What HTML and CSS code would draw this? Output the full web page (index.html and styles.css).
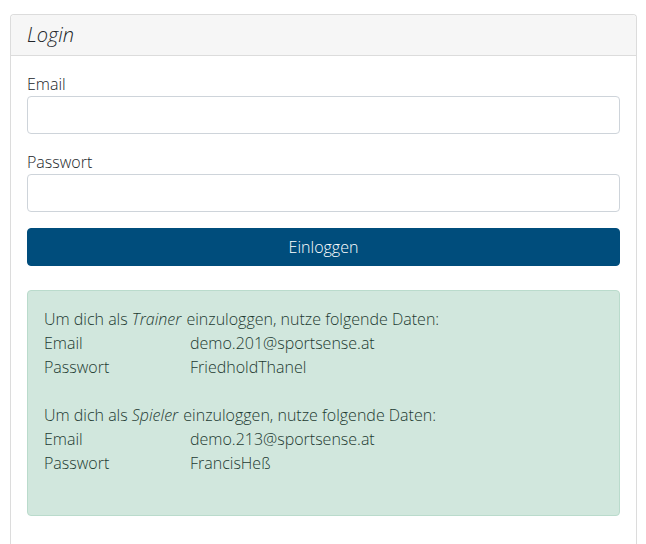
FILE: index.html
```html
<!DOCTYPE html>
<html lang="de">
<head>
<meta charset="utf-8">
<title>Login</title>
<link rel="stylesheet" href="styles.css">
</head>
<body>
<div class="card">
  <div class="card-header"><h1 class="title">Login</h1></div>
  <div class="card-body">
    <div class="field">
      <label class="label" for="email">Email</label>
      <input class="input" id="email" type="text">
    </div>
    <div class="field">
      <label class="label" for="pw">Passwort</label>
      <input class="input" id="pw" type="password">
    </div>
    <button class="btn" type="button">Einloggen</button>
    <div class="alert">
      <p class="intro">Um dich als <em>Trainer</em> einzuloggen, nutze folgende Daten:</p>
      <div class="creds">
        <span>Email</span><span>demo.201@sportsense.at</span>
        <span>Passwort</span><span>FriedholdThanel</span>
      </div>
      <p class="intro gap">Um dich als <em>Spieler</em> einzuloggen, nutze folgende Daten:</p>
      <div class="creds">
        <span>Email</span><span>demo.213@sportsense.at</span>
        <span>Passwort</span><span>FrancisHeß</span>
      </div>
    </div>
  </div>
</div>
</body>
</html>
```

FILE: styles.css
```css
html, body {
  margin: 0;
  padding: 0;
  background: #fff;
}
body {
  padding: 14px 9px 0 10px;
  font-family: "Open Sans", sans-serif;
  font-weight: 300;
  font-size: 16px;
  line-height: 24px;
  color: #212529;
}
.card {
  border: 1px solid #dcdcdc;
  border-bottom: none;
  border-radius: 4px 4px 0 0;
  height: 540px;
  box-sizing: border-box;
}
.card-header {
  background: #f6f6f6;
  border-bottom: 1px solid #dcdcdc;
  padding: 8px 16px;
  border-radius: 4px 4px 0 0;
}
.title {
  margin: 0;
  font-size: 20px;
  font-weight: 300;
  font-style: italic;
  line-height: 24px;
  color: #212529;
}
.card-body {
  padding: 16px;
  display: flex;
  flex-direction: column;
}
.field {
  display: flex;
  flex-direction: column;
  margin-bottom: 16px;
}
.label {
  display: block;
}
.input {
  height: 38px;
  box-sizing: border-box;
  border: 1px solid #ced4da;
  border-radius: 4px;
  background: #fff;
  font-family: inherit;
  font-size: 16px;
  padding: 6px 12px;
  margin: 0;
}
.btn {
  height: 38px;
  border: 1px solid #004d7c;
  border-radius: 4px;
  background: #004d7c;
  color: #fff;
  font-family: inherit;
  font-weight: 300;
  font-size: 16px;
  line-height: 24px;
  padding: 6px 12px;
  margin: 0 0 24px;
}
.alert {
  background: #d1e7dd;
  border: 1px solid #badbcc;
  border-radius: 4px;
  padding: 16px 16px 40px;
  color: #1d3a31;
}
.intro {
  margin: 0;
}
.intro.gap {
  margin-top: 24px;
}
.intro em {
  font-style: italic;
  font-weight: 300;
  margin-right: 1px;
}
.creds {
  display: grid;
  grid-template-columns: 146px 1fr;
}
```
